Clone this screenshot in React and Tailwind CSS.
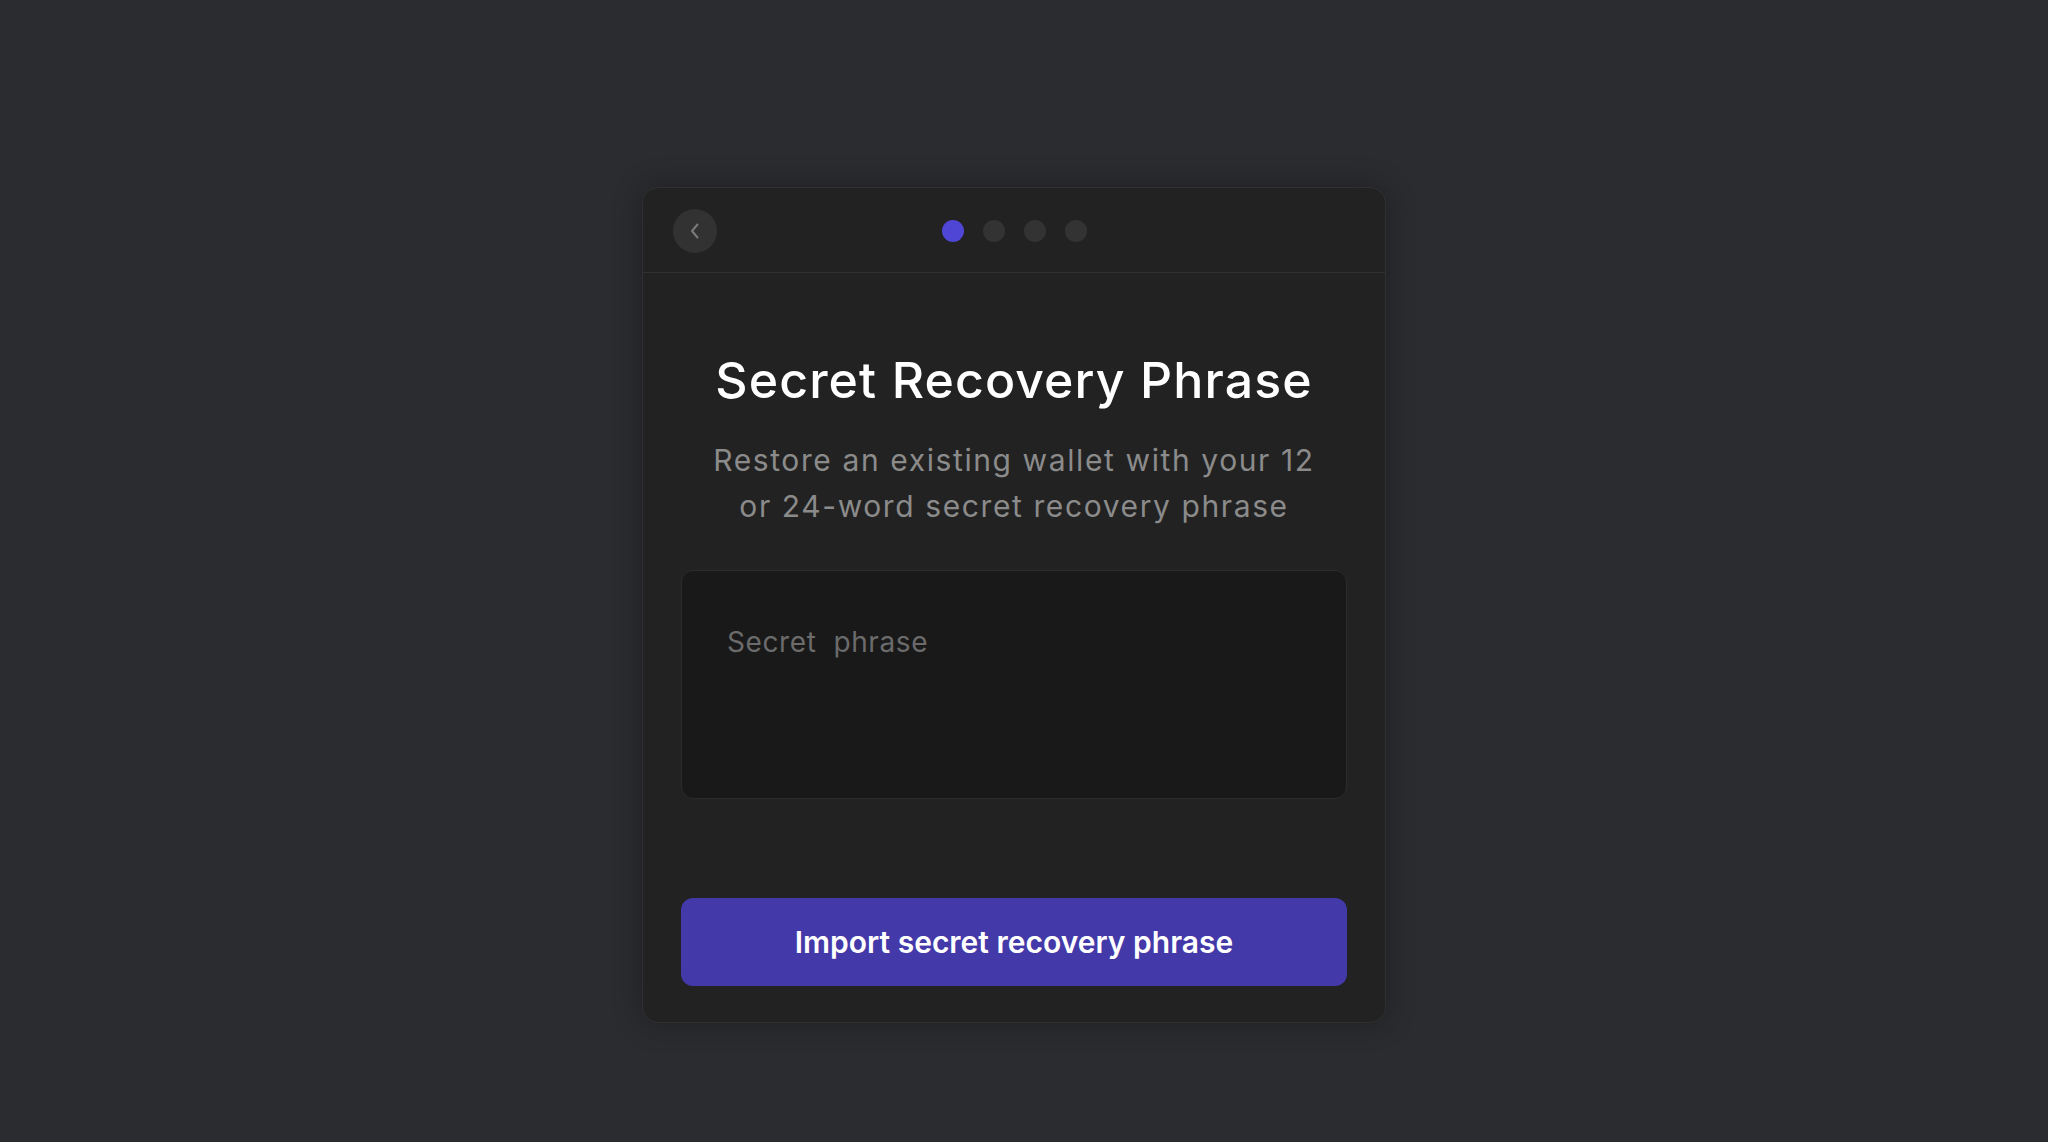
import { useState } from "react";

const steps = [0, 1, 2, 3];

export default function App() {
  const [phrase, setPhrase] = useState("");
  const current = 0;

  return (
    <div
      className="min-h-screen w-full bg-[#2b2c30] flex justify-center pt-[187px] pr-[20px]"
      style={{ fontFamily: "Inter, 'Noto Sans', sans-serif" }}
    >
      <div className="w-[744px] h-[836px] flex flex-col bg-[#222222] border border-[#303030] rounded-2xl shadow-[0_0_30px_rgba(0,0,0,0.3)]">
        {/* HEADER */}
        <div className="h-[85px] shrink-0 grid grid-cols-[44px_1fr_44px] items-center px-[30px] pt-[1px] border-b border-[#303030]">
          <button className="w-[44px] h-[44px] rounded-full bg-[#323232] flex items-center justify-center">
            <svg width="12" height="18" viewBox="0 0 12 18" fill="none">
              <path d="M8.5 2.5 L3 9 L8.5 15.5" stroke="#7a7a7a" strokeWidth="2" strokeLinecap="round" strokeLinejoin="round" />
            </svg>
          </button>
          <div className="flex justify-center gap-[19px]">
            {steps.map((s) => (
              <div
                key={s}
                className={s === current ? "w-[22px] h-[22px] rounded-full bg-[#5046d6]" : "w-[22px] h-[22px] rounded-full bg-[#333333]"}
              />
            ))}
          </div>
          <div />
        </div>

        {/* BODY */}
        <div className="flex-1 flex flex-col px-[38px] pt-[77px] pb-[36px]">
          <h1 className="text-center text-white text-[50px] leading-[60px] font-medium tracking-[1.1px]">
            Secret Recovery Phrase
          </h1>
          <p className="mt-[27px] mx-auto max-w-[630px] text-center text-[#8b8b8b] text-[30px] leading-[46px] tracking-[1.6px]">
            Restore an existing wallet with your 12 or 24-word secret recovery phrase
          </p>

          <textarea
            value={phrase}
            onChange={(e) => setPhrase(e.target.value)}
            placeholder="Secret  phrase"
            className="mt-[41px] h-[229px] w-full resize-none bg-[#191919] border border-[#2c2c2c] rounded-xl pl-[45px] pr-[45px] pt-[50px] text-[28px] leading-[42px] tracking-[0.6px] text-white placeholder:text-[#6b6b6b] outline-none"
          />

          <button className="mt-auto h-[88px] w-full rounded-xl bg-[#4339a9] text-white text-[30px] font-semibold">
            Import secret recovery phrase
          </button>
        </div>
      </div>
    </div>
  );
}
